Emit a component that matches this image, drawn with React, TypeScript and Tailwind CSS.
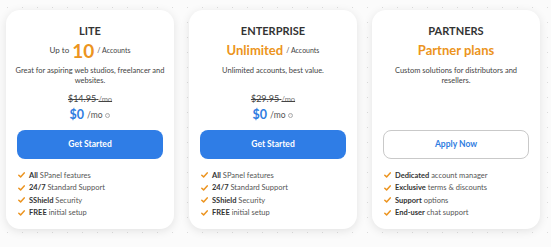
import React from "react";

type Feature = { bold: string; rest: string };

type Plan = {
  name: string;
  highlight: string;
  highlightBig?: boolean;
  suffix?: string;
  prefix?: string;
  description: string[];
  oldPrice?: string;
  showPrice: boolean;
  cta: string;
  outline?: boolean;
  features: Feature[];
};

const plans: Plan[] = [
  {
    name: "LITE",
    prefix: "Up to",
    highlight: "10",
    highlightBig: true,
    suffix: "/ Accounts",
    description: ["Great for aspiring web studios, freelancer and", "websites."],
    oldPrice: "$14.95",
    showPrice: true,
    cta: "Get Started",
    features: [
      { bold: "All", rest: "SPanel features" },
      { bold: "24/7", rest: "Standard Support" },
      { bold: "SShield", rest: "Security" },
      { bold: "FREE", rest: "initial setup" },
    ],
  },
  {
    name: "ENTERPRISE",
    highlight: "Unlimited",
    suffix: "/ Accounts",
    description: ["Unlimited accounts, best value."],
    oldPrice: "$29.95",
    showPrice: true,
    cta: "Get Started",
    features: [
      { bold: "All", rest: "SPanel features" },
      { bold: "24/7", rest: "Standard Support" },
      { bold: "SShield", rest: "Security" },
      { bold: "FREE", rest: "initial setup" },
    ],
  },
  {
    name: "PARTNERS",
    highlight: "Partner plans",
    description: ["Custom solutions for distributors and", "resellers."],
    showPrice: false,
    cta: "Apply Now",
    outline: true,
    features: [
      { bold: "Dedicated", rest: "account manager" },
      { bold: "Exclusive", rest: "terms & discounts" },
      { bold: "Support", rest: "options" },
      { bold: "End-user", rest: "chat support" },
    ],
  },
];

function Check() {
  return (
    <svg width="7" height="6" viewBox="0 0 7 6" className="shrink-0">
      <path
        d="M0.8 3.2 L2.6 4.9 L6.2 0.9"
        fill="none"
        stroke="#ec9420"
        strokeWidth="1.5"
        strokeLinecap="round"
        strokeLinejoin="round"
      />
    </svg>
  );
}

function PlanCard({ plan }: { plan: Plan }) {
  return (
    <div className="flex h-[219px] w-[168px] flex-col rounded-[14px] bg-white px-[11px] pt-[14px] shadow-[0_2px_10px_rgba(0,0,0,0.10)]">
      <div className="h-[14px] text-center text-[11px] font-bold leading-[14px] text-[#333]">
        {plan.name}
      </div>
      <div className="mt-[1px] flex h-[22px] items-center justify-center gap-[3px] text-[#444]">
        {plan.prefix && <span className="text-[8px]">{plan.prefix}</span>}
        <span
          className={
            plan.highlightBig
              ? "text-[19px] font-bold leading-none text-[#ec9420]"
              : "text-[13px] font-bold leading-none text-[#ec9420]"
          }
        >
          {plan.highlight}
        </span>
        {plan.suffix && <span className="text-[7px]">{plan.suffix}</span>}
      </div>
      <div className="-mx-[6px] mt-[5px] h-[20px] text-center text-[7.5px] leading-[9.5px] text-[#444]">
        {plan.description.map((line) => (
          <div key={line} className="whitespace-nowrap">
            {line}
          </div>
        ))}
      </div>
      {plan.showPrice ? (
        <>
          <div className="mt-[7px] h-[12px] text-center text-[9px] leading-[12px] text-[#444] line-through">
            {plan.oldPrice} <span className="text-[7.5px] text-[#777]">/mo</span>
          </div>
          <div className="mt-[2px] flex h-[16px] items-center justify-center gap-[3px]">
            <span className="text-[12.5px] font-bold leading-none text-[#2f7de1]">$0</span>
            <span className="text-[8.5px] text-[#555]">/mo</span>
            <span className="flex h-[5px] w-[5px] items-center justify-center rounded-full border border-[#aaa] text-[3px] text-[#aaa]">
              i
            </span>
          </div>
        </>
      ) : (
        <div className="mt-[9px] h-[28px]" />
      )}
      <button
        type="button"
        className={
          plan.outline
            ? "mt-[7px] h-[29px] w-full rounded-[8px] border border-[#c9c9c9] bg-white text-[8.5px] font-bold text-[#2f7de1]"
            : "mt-[7px] h-[29px] w-full rounded-[8px] bg-[#2f7de6] text-[8.5px] font-bold text-white"
        }
      >
        {plan.cta}
      </button>
      <ul className="mt-[10px] flex flex-col px-[1px]">
        {plan.features.map((f) => (
          <li
            key={f.bold}
            className="flex h-[12.5px] items-center gap-[4px] text-[7.5px] text-[#555]"
          >
            <Check />
            <span>
              <b className="font-bold text-[#333]">{f.bold}</b> {f.rest}
            </span>
          </li>
        ))}
      </ul>
    </div>
  );
}

export default function App() {
  return (
    <div
      className="flex h-[247px] w-[551px] gap-[15px] bg-[#fbfbfb] bg-[radial-gradient(#dcdcdc_0.8px,transparent_0.9px)] bg-[size:15px_15px] pl-[6px] pt-[10px]"
      style={{ fontFamily: "Lato, sans-serif" }}
    >
      {plans.map((p) => (
        <PlanCard key={p.name} plan={p} />
      ))}
    </div>
  );
}
